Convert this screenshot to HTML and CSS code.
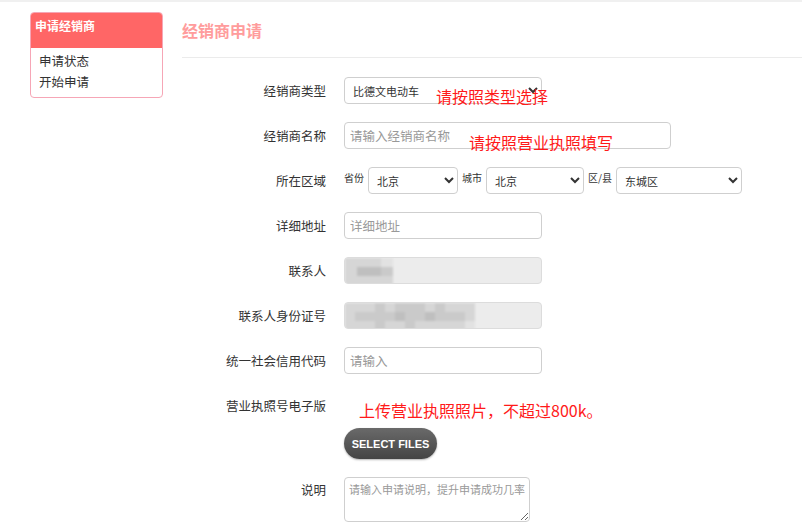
FILE: index.html
```html
<!DOCTYPE html>
<html lang="zh-CN">
<head>
<meta charset="utf-8">
<title>经销商申请</title>
<link rel="stylesheet" href="styles.css">
</head>
<body>
<div class="page">
  <aside class="side">
    <div class="side-head">申请经销商</div>
    <ul class="side-list">
      <li>申请状态</li>
      <li>开始申请</li>
    </ul>
  </aside>
  <main class="main">
    <h1 class="title">经销商申请</h1>
    <form class="form">
      <div class="row">
        <label class="lbl">经销商类型</label>
        <div class="ctl">
          <select class="sel sel-type"><option>比德文电动车</option></select>
          <span class="note note-type">请按照类型选择</span>
        </div>
      </div>
      <div class="row">
        <label class="lbl">经销商名称</label>
        <div class="ctl">
          <input class="inp inp-wide" placeholder="请输入经销商名称">
          <span class="note note-name">请按照营业执照填写</span>
        </div>
      </div>
      <div class="row">
        <label class="lbl">所在区域</label>
        <div class="ctl region">
          <span class="sub">省份</span>
          <select class="sel sel-prov"><option>北京</option></select>
          <span class="sub">城市</span>
          <select class="sel sel-city"><option>北京</option></select>
          <span class="sub">区/县</span>
          <select class="sel sel-dist"><option>东城区</option></select>
        </div>
      </div>
      <div class="row">
        <label class="lbl">详细地址</label>
        <div class="ctl"><input class="inp" placeholder="详细地址"></div>
      </div>
      <div class="row">
        <label class="lbl">联系人</label>
        <div class="ctl">
          <div class="inp disabled">
            <div class="mosaic m-short">
              <i class="c1"></i><i class="c1"></i><i class="c1"></i><i class="c0"></i>
              <i class="c1"></i><i class="c3"></i><i class="c3"></i><i class="c2"></i>
              <i class="c1"></i><i class="c1"></i><i class="c1"></i><i class="c1"></i>
            </div>
          </div>
        </div>
      </div>
      <div class="row">
        <label class="lbl">联系人身份证号</label>
        <div class="ctl">
          <div class="inp disabled">
            <div class="mosaic m-long">
              <i class="c1"></i><i class="c1"></i><i class="c1"></i><i class="c2"></i><i class="c1"></i><i class="c2"></i><i class="c2"></i><i class="c2"></i><i class="c1"></i><i class="c2"></i><i class="c1"></i><i class="c1"></i><i class="c1"></i>
              <i class="c1"></i><i class="c2"></i><i class="c2"></i><i class="c2"></i><i class="c2"></i><i class="c3"></i><i class="c2"></i><i class="c2"></i><i class="c3"></i><i class="c2"></i><i class="c2"></i><i class="c2"></i><i class="c1"></i>
              <i class="c1"></i><i class="c1"></i><i class="c1"></i><i class="c2"></i><i class="c1"></i><i class="c1"></i><i class="c2"></i><i class="c1"></i><i class="c1"></i><i class="c1"></i><i class="c1"></i><i class="c1"></i><i class="c0"></i>
            </div>
          </div>
        </div>
      </div>
      <div class="row">
        <label class="lbl">统一社会信用代码</label>
        <div class="ctl"><input class="inp" placeholder="请输入"></div>
      </div>
      <div class="row row-top">
        <label class="lbl">营业执照号电子版</label>
        <div class="ctl upload">
          <p class="upload-note">上传营业执照照片，不超过800k。</p>
          <button type="button" class="btn">SELECT FILES</button>
        </div>
      </div>
      <div class="row row-top">
        <label class="lbl">说明</label>
        <div class="ctl"><textarea class="txt" placeholder="请输入申请说明，提升申请成功几率"></textarea></div>
      </div>
    </form>
  </main>
</div>
</body>
</html>
```

FILE: styles.css
```css
* { box-sizing: border-box; }
html, body { margin: 0; padding: 0; }
body {
  background: #fff;
  font-family: "Noto Sans CJK SC", "Liberation Sans", sans-serif;
  color: #333;
  border-top: 2px solid #f0f0f0;
}
.page {
  display: flex;
  align-items: flex-start;
}
.side {
  margin: 10px 0 0 30px;
  width: 133px;
  border: 1px solid #f6a6b6;
  border-radius: 4px;
  overflow: hidden;
}
.side-head {
  height: 35px;
  background: #ff6666;
  color: #fff;
  font-size: 12px;
  font-weight: bold;
  padding: 5px 0 0 4px;
  line-height: 16px;
}
.side-list {
  list-style: none;
  margin: 0;
  padding: 2px 0 5px 8px;
}
.side-list li {
  font-size: 12.5px;
  line-height: 21px;
  color: #333;
}
.main {
  flex: 1;
  margin-left: 19px;
  padding-top: 18px;
}
.title {
  margin: 0;
  font-size: 16px;
  line-height: 20px;
  font-weight: bold;
  color: #ff9c9c;
  padding-bottom: 17px;
  border-bottom: 1px solid #ebebeb;
}
.form {
  margin-top: 19px;
  display: flex;
  flex-direction: column;
  gap: 18px;
}
.row {
  display: flex;
  align-items: center;
  min-height: 27px;
}
.row-top { align-items: flex-start; }
.lbl {
  width: 144px;
  flex: none;
  text-align: right;
  font-size: 12.5px;
  line-height: 16px;
  color: #333;
  margin-right: 18px;
}
.row-top .lbl { padding-top: 6px; }
.row-top + .row-top .lbl { padding-top: 5px; }
.ctl {
  position: relative;
  display: flex;
  align-items: center;
}
.sel {
  height: 27px;
  border: 1px solid #cfcfcf;
  border-radius: 4px;
  background: #fff;
  font-family: "Noto Sans CJK SC", sans-serif;
  font-size: 11px;
  color: #333;
  padding: 0 4px;
}
.sel-type { width: 198px; }
.sel-prov { width: 90px; }
.sel-city { width: 98px; }
.sel-dist { width: 126px; }
.region { gap: 4px; }
.sub {
  font-size: 10px;
  line-height: 14px;
  color: #333;
  align-self: center;
  margin-top: -6px;
}
.inp {
  width: 198px;
  height: 27px;
  border: 1px solid #cfcfcf;
  border-radius: 4px;
  background: #fff;
  font-family: "Noto Sans CJK SC", sans-serif;
  font-size: 12.5px;
  padding: 0 5px;
  color: #333;
}
.inp::placeholder, .txt::placeholder { color: #999; }
.inp-wide { width: 327px; }
.disabled {
  background: #ececec;
  border-color: #dcdcdc;
  padding: 0;
  overflow: hidden;
}
.mosaic {
  display: grid;
  grid-template-rows: repeat(3, 9px);
  height: 25px;
  filter: blur(0.8px);
}
.m-short { grid-template-columns: repeat(4, 12px); width: 48px; }
.m-long { grid-template-columns: repeat(13, 10px); width: 131px; }
.mosaic i { display: block; }
.c0 { background: #e2e2e2; }
.c1 { background: #d6d6d6; }
.c2 { background: #cacaca; }
.c3 { background: #bfbfbf; }
.note {
  position: absolute;
  color: #ff1a1a;
  font-size: 16px;
  line-height: 18px;
  white-space: nowrap;
}
.note-type { left: 92px; top: 10px; }
.note-name { left: 125px; top: 11px; }
.upload {
  flex-direction: column;
  align-items: flex-start;
}
.upload-note {
  margin: 9px 0 0 15px;
  color: #ff1a1a;
  font-size: 16px;
  line-height: 18px;
}
.btn {
  margin-top: 9px;
  width: 93px;
  height: 31px;
  border: none;
  border-radius: 16px;
  background: linear-gradient(#6a6a6a, #444);
  box-shadow: 0 1px 2px rgba(0,0,0,0.3);
  color: #fff;
  font-family: "Liberation Sans", Arial, sans-serif;
  font-weight: bold;
  font-size: 11px;
  padding: 0;
}
.txt {
  width: 186px;
  height: 45px;
  border: 1px solid #cfcfcf;
  border-radius: 4px;
  font-family: "Noto Sans CJK SC", sans-serif;
  font-size: 11px;
  line-height: 16px;
  padding: 3px 4px;
  resize: vertical;
}
```
